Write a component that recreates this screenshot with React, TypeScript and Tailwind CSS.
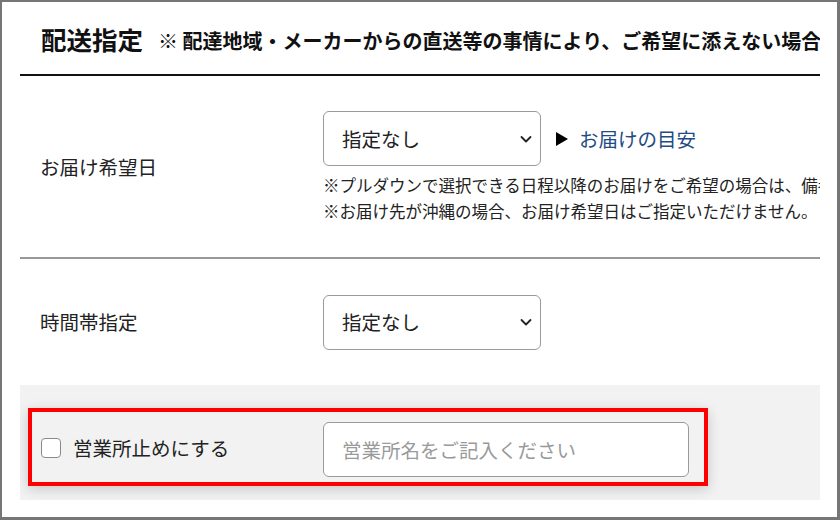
import React from "react";

function Chevron() {
  return (
    <svg width="14" height="10" viewBox="0 0 14 10" className="absolute right-[7px] top-1/2 -translate-y-1/2">
      <path d="M2.5 3 L7 7.5 L11.5 3" fill="none" stroke="#222" strokeWidth="1.8" strokeLinecap="round" strokeLinejoin="round" />
    </svg>
  );
}

function SelectBox() {
  return (
    <div className="relative w-[218px] h-[55px] rounded-[6px] border border-[#9a9a9a] bg-white flex items-center pl-[18px] text-[19.5px] text-[#222]">
      指定なし
      <Chevron />
    </div>
  );
}

export default function App() {
  return (
    <div className="w-[840px] h-[520px] border-2 border-r-[3px] border-b-[3px] border-[#767676] bg-white overflow-hidden font-['Noto_Sans_CJK_JP','Noto_Sans',sans-serif] text-[#222]">
      <div className="ml-[18px] mr-[17px] overflow-hidden">
        <div className="h-[74px] border-b-2 border-[#111] flex items-center pl-[21px] pt-[2px] whitespace-nowrap">
          <span className="text-[25.5px] font-bold text-[#111]">配送指定</span>
          <span className="ml-[15px] text-[20px] font-bold text-[#111] mt-[3px]">
            ※ 配達地域・メーカーからの直送等の事情により、ご希望に添えない場合があります。
          </span>
        </div>

        <div className="h-[183px] border-b-2 border-[#999] flex items-center">
          <div className="w-[303px] shrink-0 pl-[20px] text-[19.5px]">お届け希望日</div>
          <div className="self-start pt-[35px] flex flex-col whitespace-nowrap">
            <div className="flex items-center">
              <SelectBox />
              <svg width="12" height="14" viewBox="0 0 12 14" className="ml-[15px] shrink-0">
                <polygon points="0,0 12,7 0,14" fill="#000" />
              </svg>
              <span className="ml-[11px] text-[19.5px] text-[#1f4c85]">お届けの目安</span>
            </div>
            <div className="mt-[6px] text-[16.5px] leading-[26px] text-[#222]">
              <div>※プルダウンで選択できる日程以降のお届けをご希望の場合は、備考欄にご記入ください。</div>
              <div>※お届け先が沖縄の場合、お届け希望日はご指定いただけません。</div>
            </div>
          </div>
        </div>

        <div className="h-[126px] flex items-center">
          <div className="w-[303px] shrink-0 pl-[20px] text-[19.5px]">時間帯指定</div>
          <SelectBox />
        </div>

        <div className="h-[115px] bg-[#f2f2f2] pt-[23px] pl-[8px]">
          <div className="w-[680px] h-[78px] border-4 border-[#ff0000] shadow-[0_3px_12px_rgba(0,0,0,0.18)] flex items-center pt-[5px]">
            <div className="w-[291px] shrink-0 flex items-center pl-[9px] -mt-[3px]">
              <span className="w-[20px] h-[20px] rounded-[4px] border border-[#8a8a8a] bg-white shrink-0"></span>
              <span className="ml-[12px] text-[19.5px] text-[#222]">営業所止めにする</span>
            </div>
            <div className="w-[366px] h-[55px] rounded-[6px] border border-[#9a9a9a] bg-white flex items-center pl-[18px] text-[19.5px] text-[#9a9a9a]">
              営業所名をご記入ください
            </div>
          </div>
        </div>
      </div>
    </div>
  );
}
